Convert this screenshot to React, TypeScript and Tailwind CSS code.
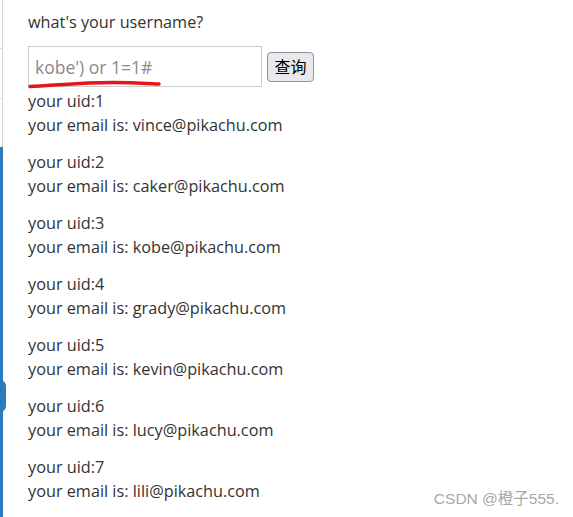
import React from 'react';

const users = [
  { uid: 1, email: 'vince@pikachu.com' },
  { uid: 2, email: 'caker@pikachu.com' },
  { uid: 3, email: 'kobe@pikachu.com' },
  { uid: 4, email: 'grady@pikachu.com' },
  { uid: 5, email: 'kevin@pikachu.com' },
  { uid: 6, email: 'lucy@pikachu.com' },
  { uid: 7, email: 'lili@pikachu.com' },
];

const App: React.FC = () => {
  return (
    <div className="relative flex w-[573px] h-[517px] overflow-hidden bg-white font-['Open_Sans','Noto_Sans_CJK_SC',sans-serif] text-[#333]">
      {/* left edge of the page chrome */}
      <div className="flex flex-col w-[4px] shrink-0">
        <div className="h-[147px] border-r border-[#d4d4d4] w-[3px] flex flex-col">
          <div className="mt-[48px] h-px w-[2px] bg-[#ddd]" />
          <div className="mt-[49px] h-px w-[2px] bg-[#ddd]" />
        </div>
        <div className="flex-1 w-[3px] bg-[#2b7bbd]" />
      </div>
      <div className="absolute left-0 top-[380px] w-[6px] h-[32px] rounded-r-full bg-[#2b7bbd]" />

      <div className="flex-1 pl-[24px] pt-[10px]">
        <p className="text-[16.25px] leading-[24px]">what's your username?</p>

        <div className="relative mt-[12px] flex items-center">
          <input
            readOnly
            placeholder="kobe') or 1=1#"
            className="w-[234px] h-[41px] border border-[#ccc] px-[6px] text-[17.5px] placeholder:text-[#8a8a8a] outline-none"
          />
          <button className="ml-[5px] mt-[1px] w-[47px] h-[30px] rounded-[4px] border border-[#8f8f9d] bg-[#e9e9ed] text-[16px] text-black leading-none">
            查询
          </button>
          <svg className="absolute left-0 top-[34px] w-[134px] h-[10px]" viewBox="0 0 134 10" fill="none">
            <path d="M2 6.5 C 30 5, 55 2.5, 85 2.5 C 105 2.5, 120 3.5, 131 4" stroke="#e3161b" strokeWidth="3.5" strokeLinecap="round" />
          </svg>
        </div>

        <div className="mt-[2px] text-[16.25px] leading-[24px]">
          {users.map((u) => (
            <div key={u.uid} className="mb-[13px]">
              <p>your uid:{u.uid}</p>
              <p>your email is: {u.email}</p>
            </div>
          ))}
        </div>
      </div>

      <div className="absolute right-[14px] bottom-[7px] text-[15.5px] text-[#a8a8a8] font-['Liberation_Sans','Noto_Sans_CJK_SC',sans-serif]">
        CSDN @橙子555.
      </div>
    </div>
  );
};

export default App;
